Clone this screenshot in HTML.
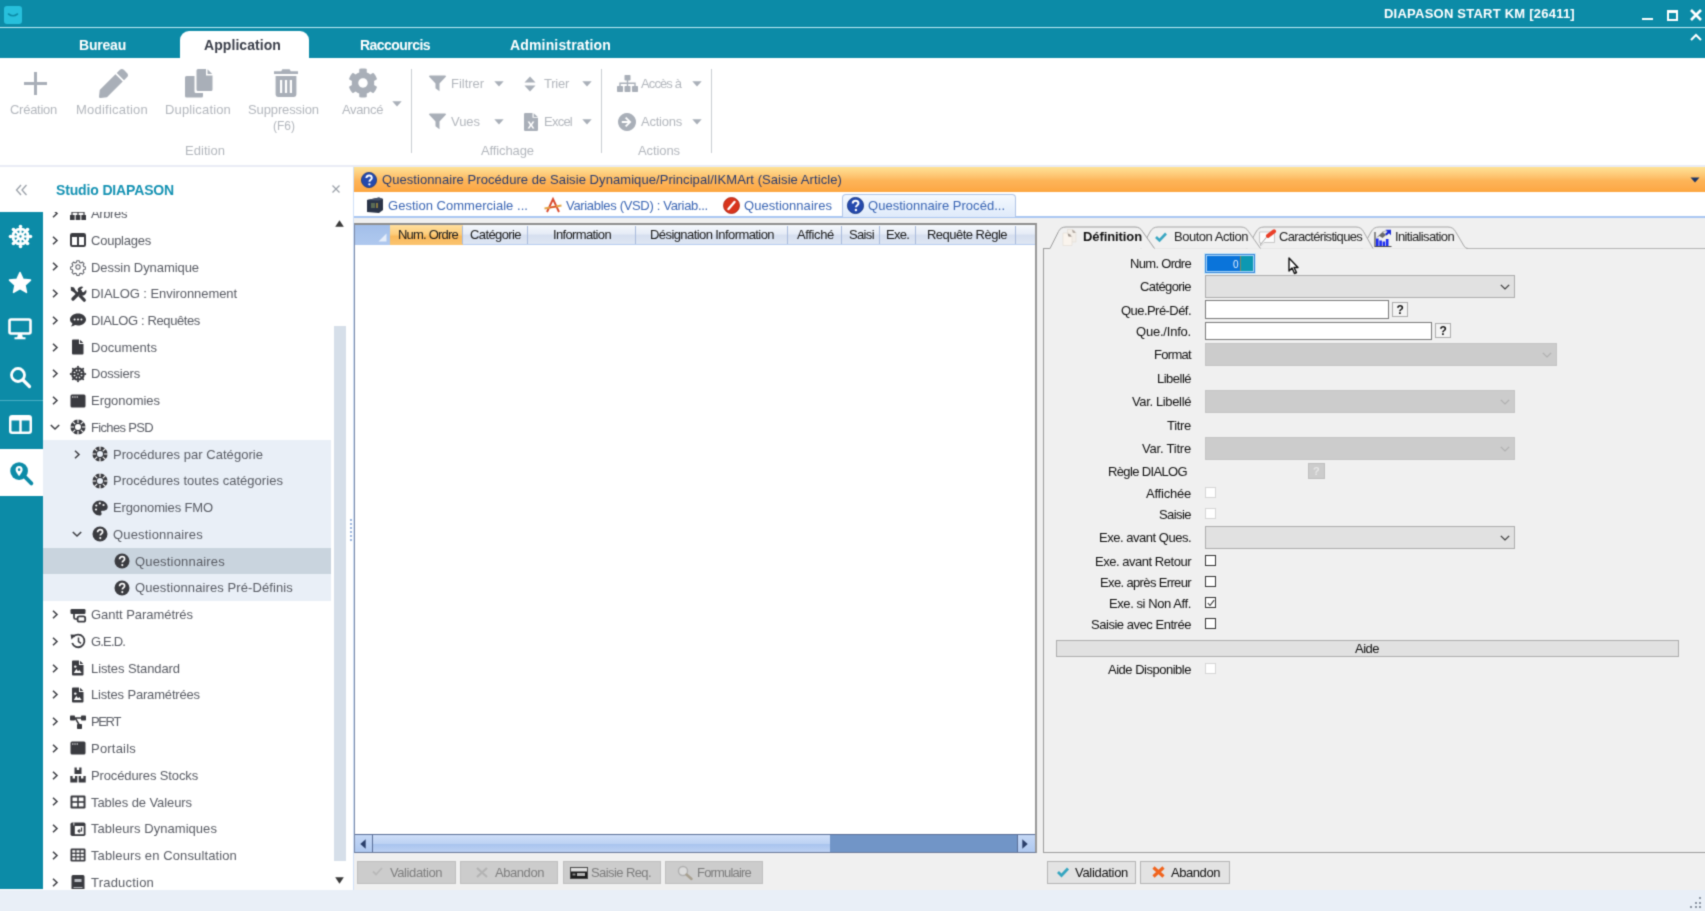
<!DOCTYPE html>
<html lang="fr"><head><meta charset="utf-8"><title>DIAPASON START KM [26411]</title>
<style>
html,body{margin:0;padding:0;overflow:hidden;}
#clip{position:absolute;left:0;top:0;width:1705px;height:911px;overflow:hidden;}
body{width:1705px;height:911px;position:relative;overflow:hidden;background:#fff;font-family:"Liberation Sans",Arial,sans-serif;}
.a{position:absolute;box-sizing:border-box;}
.t{position:absolute;white-space:nowrap;}
svg{overflow:visible;}
#wrap{position:absolute;left:0;top:0;width:1712px;height:918px;background:#fff;filter:url(#soft);}
</style></head><body>
<svg width="0" height="0" style="position:absolute"><defs><filter id="soft" x="0" y="0" width="100%" height="100%" color-interpolation-filters="sRGB"><feConvolveMatrix order="3" kernelMatrix="1 4 1 4 16 4 1 4 1" divisor="36" edgeMode="duplicate" preserveAlpha="true"/></filter></defs></svg>
<div id="clip"><div id="wrap">
<div class="a" style="left:0px;top:0px;width:1712px;height:58px;background:#0c8ba7;"></div>
<div class="a" style="left:0px;top:27px;width:1712px;height:1px;background:#bdeaf4;"></div>
<div class="a" style="left:4px;top:6px;width:18px;height:18px;background:#27c0dc;border-radius:3px;"></div>
<svg class="a" style="left:8px;top:13px;" width="10" height="5" viewBox="0 0 10 5"><path d="M0.5 1 Q5 4.5 9.5 1" fill="none" stroke="#0c8ba7" stroke-width="1.6" stroke-linecap="round"/></svg>
<span class="t" style="left:1384.0px;top:4.5px;font-size:13px;line-height:17px;color:#ffffff;letter-spacing:0.23px;font-weight:bold;">DIAPASON START KM [26411]</span>
<div class="a" style="left:1642px;top:18px;width:11px;height:2px;background:#fff;"></div>
<div class="a" style="left:1667px;top:10px;width:11px;height:11px;border:2px solid #fff;border-top-width:3px;"></div>
<svg class="a" style="left:1690px;top:9px;" width="12" height="12" viewBox="0 0 12 12"><path d="M1 1 L11 11 M11 1 L1 11" stroke="#fff" stroke-width="2.6" fill="none"/></svg>
<svg class="a" style="left:1690px;top:33px;" width="12" height="8" viewBox="0 0 12 8"><path d="M1 7 L6 2 L11 7" stroke="#fff" stroke-width="2" fill="none"/></svg>
<div class="a" style="left:180px;top:31px;width:129px;height:27px;background:#fff;border-radius:9px 9px 0 0;"></div>
<span class="t" style="left:79.0px;top:35.8px;font-size:14px;line-height:18px;color:#ffffff;letter-spacing:-0.21px;font-weight:bold;">Bureau</span>
<span class="t" style="left:204.0px;top:35.8px;font-size:14px;line-height:18px;color:#3b3f4a;letter-spacing:0.07px;font-weight:bold;">Application</span>
<span class="t" style="left:360.0px;top:35.8px;font-size:14px;line-height:18px;color:#ffffff;letter-spacing:-0.55px;font-weight:bold;">Raccourcis</span>
<span class="t" style="left:510.0px;top:35.8px;font-size:14px;line-height:18px;color:#ffffff;letter-spacing:0.16px;font-weight:bold;">Administration</span>
<div class="a" style="left:0px;top:58px;width:1712px;height:107px;background:#fff;"></div>
<div class="a" style="left:0px;top:165px;width:1712px;height:2px;background:#e9ecf5;"></div>
<div class="a" style="left:24px;top:81.5px;width:23px;height:3.0px;background:#a9afb8;"></div>
<div class="a" style="left:34px;top:71.5px;width:3px;height:23.0px;background:#a9afb8;"></div>
<svg class="a" style="left:99px;top:68.5px;" width="29" height="29" viewBox="0 0 512 512"><path fill="#a9afb8" d="M290.74 93.24l128.020 128.020-277.990 277.990-114.140 12.600C11.350 513.540-1.560 500.620.14 485.340l12.700-114.220 277.900-277.880zm207.200-19.060l-60.110-60.110c-18.750-18.750-49.160-18.750-67.910 0l-56.550 56.550 128.020 128.020 56.550-56.550c18.750-18.760 18.750-49.160 0-67.910z"/></svg>
<svg class="a" style="left:184px;top:68px;" width="30" height="30" viewBox="0 0 30 30"><g fill="#a9afb8"><path d="M13 1 h9 v6.5 h6.5 v14 a1.5 1.5 0 0 1 -1.5 1.5 h-13 a1.5 1.5 0 0 1 -1.5 -1.5 v-19 a1.5 1.5 0 0 1 1.5 -1.5z"/><path d="M23.5 1.3 l4.7 4.7 h-4.7z"/><path d="M2.5 8 h8 v15.5 a1.5 1.5 0 0 0 1.5 1.5 h7 v3 a1.5 1.5 0 0 1 -1.5 1.5 h-15 a1.5 1.5 0 0 1 -1.5 -1.5 v-18.5 a1.5 1.5 0 0 1 1.5 -1.5z"/></g></svg>
<svg class="a" style="left:273px;top:68px;" width="26" height="30" viewBox="0 0 26 30"><g fill="#a9afb8"><path d="M1 3.2 h7.2 l1.2 -2 h7.2 l1.2 2 h7.2 v2.8 h-24z"/><path d="M2.6 8 h20.8 v18.6 a2.4 2.4 0 0 1 -2.4 2.4 h-16 a2.4 2.4 0 0 1 -2.4 -2.4z M7 12 v13 h2.2 v-13z M11.9 12 v13 h2.2 v-13z M16.8 12 v13 h2.2 v-13z" fill-rule="evenodd"/></g></svg>
<svg class="a" style="left:348px;top:68px;" width="30" height="30" viewBox="0 0 512 512"><path fill="#a9afb8" d="M487.4 315.7l-42.6-24.6c4.3-23.2 4.3-47 0-70.2l42.6-24.6c4.9-2.8 7.1-8.6 5.500-14-11.100-35.600-30-67.800-54.700-94.600-3.800-4.100-10-5.100-14.800-2.300L380.800 110c-17.900-15.400-38.500-27.300-60.800-35.100V25.800c0-5.600-3.900-10.500-9.400-11.700-36.700-8.200-74.300-7.800-109.200 0-5.500 1.200-9.400 6.100-9.400 11.700V75c-22.200 7.900-42.800 19.800-60.800 35.100L88.700 85.500c-4.900-2.800-11-1.900-14.800 2.300-24.700 26.700-43.600 58.900-54.700 94.600-1.700 5.400.6 11.200 5.500 14L67.300 221c-4.300 23.200-4.300 47 0 70.200l-42.600 24.600c-4.900 2.800-7.100 8.600-5.500 14 11.100 35.600 30 67.800 54.700 94.600 3.800 4.100 10 5.100 14.800 2.300l42.600-24.600c17.900 15.400 38.500 27.300 60.800 35.100v49.200c0 5.600 3.900 10.500 9.400 11.700 36.700 8.200 74.300 7.800 109.200 0 5.500-1.200 9.400-6.100 9.400-11.700v-49.200c22.200-7.900 42.800-19.800 60.800-35.100l42.600 24.600c4.900 2.800 11 1.900 14.800-2.300 24.700-26.700 43.600-58.900 54.700-94.600 1.500-5.500-.7-11.300-5.600-14.100zM256 336c-44.100 0-80-35.900-80-80s35.900-80 80-80 80 35.900 80 80-35.900 80-80 80z"/></svg>
<span class="t" style="left:10.0px;top:100.8px;font-size:13px;line-height:17px;color:#b3b7bd;letter-spacing:-0.27px;">Création</span>
<span class="t" style="left:76.0px;top:100.8px;font-size:13px;line-height:17px;color:#b3b7bd;letter-spacing:0.22px;">Modification</span>
<span class="t" style="left:165.0px;top:100.8px;font-size:13px;line-height:17px;color:#b3b7bd;letter-spacing:0.15px;">Duplication</span>
<span class="t" style="left:248.0px;top:100.8px;font-size:13px;line-height:17px;color:#b3b7bd;letter-spacing:-0.12px;">Suppression</span>
<span class="t" style="left:273.0px;top:118.3px;font-size:12px;line-height:16px;color:#b3b7bd;letter-spacing:0.00px;">(F6)</span>
<span class="t" style="left:342.0px;top:100.8px;font-size:13px;line-height:17px;color:#b3b7bd;letter-spacing:-0.35px;">Avancé</span>
<span class="t" style="left:185.0px;top:141.8px;font-size:13px;line-height:17px;color:#b3b7bd;letter-spacing:0.04px;">Edition</span>
<span class="t" style="left:481.0px;top:141.8px;font-size:13px;line-height:17px;color:#b3b7bd;letter-spacing:-0.11px;">Affichage</span>
<span class="t" style="left:638.0px;top:141.8px;font-size:13px;line-height:17px;color:#b3b7bd;letter-spacing:-0.09px;">Actions</span>
<svg class="a" style="left:392px;top:101px;" width="10" height="6" viewBox="0 0 10 6"><path d="M0.3 0.3 h9.4 l-4.7 5.2z" fill="#a9afb8"/></svg>
<div class="a" style="left:411px;top:69px;width:1px;height:84px;background:#c9cdd2;"></div>
<div class="a" style="left:601px;top:69px;width:1px;height:84px;background:#c9cdd2;"></div>
<div class="a" style="left:711px;top:69px;width:1px;height:84px;background:#c9cdd2;"></div>
<svg class="a" style="left:428px;top:75px;" width="18" height="17" viewBox="0 0 18 17"><path d="M0.8 0.5 h16.4 a0.8 0.8 0 0 1 0.6 1.3 l-6.3 6.6 v7.8 l-4 -2.9 v-4.9 l-6.300 -6.600 a0.800 0.800 0 0 1 0.600 -1.300z" fill="#a9afb8"/></svg>
<svg class="a" style="left:428px;top:113px;" width="18" height="17" viewBox="0 0 18 17"><path d="M0.8 0.5 h16.4 a0.8 0.8 0 0 1 0.6 1.3 l-6.3 6.6 v7.8 l-4 -2.9 v-4.9 l-6.300 -6.600 a0.800 0.800 0 0 1 0.600 -1.300z" fill="#a9afb8"/></svg>
<span class="t" style="left:451.0px;top:74.8px;font-size:13px;line-height:17px;color:#b3b7bd;letter-spacing:-0.03px;">Filtrer</span>
<svg class="a" style="left:494px;top:81px;" width="10" height="6" viewBox="0 0 10 6"><path d="M0.3 0.3 h9.4 l-4.7 5.2z" fill="#a9afb8"/></svg>
<span class="t" style="left:451.0px;top:112.8px;font-size:13px;line-height:17px;color:#b3b7bd;letter-spacing:-0.04px;">Vues</span>
<svg class="a" style="left:494px;top:119px;" width="10" height="6" viewBox="0 0 10 6"><path d="M0.3 0.3 h9.4 l-4.7 5.2z" fill="#a9afb8"/></svg>
<svg class="a" style="left:524px;top:76px;" width="12" height="16" viewBox="0 0 12 16"><path d="M0.5 6.5 L6 0.5 L11.5 6.5z M0.5 9.500 L6 15.500 L11.500 9.500z" fill="#a9afb8"/></svg>
<span class="t" style="left:544.0px;top:74.8px;font-size:13px;line-height:17px;color:#b3b7bd;letter-spacing:-0.25px;">Trier</span>
<svg class="a" style="left:582px;top:81px;" width="10" height="6" viewBox="0 0 10 6"><path d="M0.3 0.3 h9.4 l-4.7 5.2z" fill="#a9afb8"/></svg>
<svg class="a" style="left:524px;top:113px;" width="14" height="18" viewBox="0 0 14 18"><path fill="#a9afb8" fill-rule="evenodd" d="M1.2 0 h7.3 v4.8 h5.500 v12 a1.200 1.200 0 0 1 -1.200 1.200 h-11.600 a1.200 1.200 0 0 1 -1.200 -1.200 v-15.600 a1.200 1.200 0 0 1 1.200 -1.200z M9.700 0.200 l4.100 3.700 h-4.100z M3.600 8.500 l2.300 3.500 l-2.300 3.500 h1.900 l1.500 -2.400 l1.500 2.400 h1.900 l-2.300 -3.500 l2.300 -3.500 h-1.900 l-1.500 2.400 l-1.500 -2.400z"/></svg>
<span class="t" style="left:544.0px;top:112.8px;font-size:13px;line-height:17px;color:#b3b7bd;letter-spacing:-0.76px;">Excel</span>
<svg class="a" style="left:582px;top:119px;" width="10" height="6" viewBox="0 0 10 6"><path d="M0.3 0.3 h9.4 l-4.7 5.2z" fill="#a9afb8"/></svg>
<svg class="a" style="left:617px;top:75px;" width="21" height="17" viewBox="0 0 21 17"><g fill="#a9afb8"><rect x="7.5" y="0" width="6" height="5.500" rx="0.800"/><rect x="0" y="11" width="6" height="6" rx="0.800"/><rect x="7.500" y="11" width="6" height="6" rx="0.800"/><rect x="15" y="11" width="6" height="6" rx="0.800"/><path d="M9.800 5 h1.400 v2.600 h7.500 v3.800 h-1.400 v-2.400 h-6.100 v2.400 h-1.400 v-2.400 h-6.100 v2.400 h-1.400 v-3.800 h7.500z"/></g></svg>
<span class="t" style="left:641.0px;top:74.8px;font-size:13px;line-height:17px;color:#b3b7bd;letter-spacing:-0.89px;">Accès à</span>
<svg class="a" style="left:692px;top:81px;" width="10" height="6" viewBox="0 0 10 6"><path d="M0.3 0.3 h9.4 l-4.7 5.2z" fill="#a9afb8"/></svg>
<svg class="a" style="left:618px;top:113px;" width="18" height="18" viewBox="0 0 18 18"><path fill="#a9afb8" fill-rule="evenodd" d="M9 0 a9 9 0 1 0 0.010 0z M8.300 3.900 l5.100 5.100 l-5.100 5.100 l-1.300 -1.300 l2.800 -2.800 h-6 v-2 h6 l-2.800 -2.800z"/></svg>
<span class="t" style="left:641.0px;top:112.8px;font-size:13px;line-height:17px;color:#b3b7bd;letter-spacing:-0.23px;">Actions</span>
<svg class="a" style="left:692px;top:119px;" width="10" height="6" viewBox="0 0 10 6"><path d="M0.3 0.3 h9.4 l-4.7 5.2z" fill="#a9afb8"/></svg>
<svg class="a" style="left:15px;top:184px;" width="13" height="12" viewBox="0 0 13 12"><path d="M6 1 L1.500 6 L6 11 M11.500 1 L7 6 L11.500 11" fill="none" stroke="#9aa0a8" stroke-width="1.300"/></svg>
<span class="t" style="left:56.0px;top:180.8px;font-size:14px;line-height:18px;color:#1592b3;letter-spacing:-0.15px;font-weight:bold;">Studio DIAPASON</span>
<svg class="a" style="left:332px;top:185px;" width="8" height="8" viewBox="0 0 8 8"><path d="M0.500 0.500 L7.500 7.500 M7.500 0.500 L0.500 7.500" stroke="#9aa0a8" stroke-width="1.200" fill="none"/></svg>
<div class="a" style="left:0px;top:212px;width:43px;height:677px;background:#0c8ba7;"></div>
<div class="a" style="left:0px;top:400px;width:43px;height:1px;background:#4aaec4;"></div>
<div class="a" style="left:0px;top:449px;width:43px;height:47px;background:#fff;"></div>
<svg class="a" style="left:8.5px;top:224.8px;" width="23" height="23" viewBox="0 0 24 24"><circle cx="12" cy="12" r="9.500" fill="#fff"/><circle cx="12.00" cy="1.60" r="1.900" fill="#fff"/><circle cx="19.35" cy="4.65" r="1.900" fill="#fff"/><circle cx="22.40" cy="12.00" r="1.900" fill="#fff"/><circle cx="19.35" cy="19.35" r="1.900" fill="#fff"/><circle cx="12.00" cy="22.40" r="1.900" fill="#fff"/><circle cx="4.65" cy="19.35" r="1.900" fill="#fff"/><circle cx="1.60" cy="12.00" r="1.900" fill="#fff"/><circle cx="4.65" cy="4.65" r="1.900" fill="#fff"/><path d="M13.08 7.84 L13.30 5.63 L15.59 6.58 L14.18 8.29z" fill="#0c8ba7"/><path d="M15.71 9.82 L17.42 8.41 L18.37 10.70 L16.16 10.92z" fill="#0c8ba7"/><path d="M16.16 13.08 L18.37 13.30 L17.42 15.59 L15.71 14.18z" fill="#0c8ba7"/><path d="M14.18 15.71 L15.59 17.42 L13.30 18.37 L13.08 16.16z" fill="#0c8ba7"/><path d="M10.92 16.16 L10.70 18.37 L8.41 17.42 L9.82 15.71z" fill="#0c8ba7"/><path d="M8.29 14.18 L6.58 15.59 L5.63 13.30 L7.84 13.08z" fill="#0c8ba7"/><path d="M7.84 10.92 L5.63 10.70 L6.58 8.41 L8.29 9.82z" fill="#0c8ba7"/><path d="M9.82 8.29 L8.41 6.58 L10.70 5.63 L10.92 7.84z" fill="#0c8ba7"/><circle cx="12" cy="12" r="1.200" fill="#0c8ba7"/></svg>
<svg class="a" style="left:8px;top:271px;" width="24" height="23" viewBox="0 0 24 23"><path fill="#fff" stroke="#fff" stroke-width="1.500" stroke-linejoin="round" d="M12 1.500 L15.100 8.200 L22.500 9.100 L17 14.100 L18.500 21.400 L12 17.700 L5.500 21.400 L7 14.100 L1.500 9.100 L8.900 8.200z"/></svg>
<svg class="a" style="left:8px;top:318px;" width="24" height="22" viewBox="0 0 24 22"><g fill="none" stroke="#fff"><rect x="1.500" y="1.500" width="21" height="14" rx="1.500" stroke-width="2.600"/></g><path fill="#fff" d="M10 16 h4 l0.800 3.200 h2.700 v2 h-11 v-2 h2.700z"/></svg>
<svg class="a" style="left:9px;top:366px;" width="22" height="22" viewBox="0 0 22 22"><circle cx="9" cy="9" r="6.500" fill="none" stroke="#fff" stroke-width="2.800"/><path d="M14 14 L20.500 20.500" stroke="#fff" stroke-width="3.200" stroke-linecap="round"/></svg>
<svg class="a" style="left:9px;top:415px;" width="23" height="19" viewBox="0 0 23 19"><rect x="1.250" y="1.250" width="20.500" height="16.500" rx="2" fill="none" stroke="#fff" stroke-width="2.500"/><path d="M1 1.500 h21 v4 h-21z M10.300 2 h2.400 v16 h-2.400z" fill="#fff"/></svg>
<svg class="a" style="left:8.5px;top:460.5px;" width="24.5" height="24.5" viewBox="0 0 23 23"><circle cx="9.500" cy="9.500" r="8.300" fill="#0c8ba7"/><path d="M15 15 L21 21" stroke="#0c8ba7" stroke-width="3.600" stroke-linecap="round"/><path fill="#fff" d="M9.500 4.800 a3.300 3.300 0 0 1 3.300 3.300 c0 2.200 -3.300 6 -3.300 6 c0 0 -3.300 -3.800 -3.300 -6 a3.300 3.300 0 0 1 3.300 -3.300z"/><circle cx="9.500" cy="8.100" r="1.200" fill="#0c8ba7"/></svg>
<div class="a" style="left:43px;top:212px;width:290px;height:677px;overflow:hidden;">
<div class="a" style="left:0;top:228.0px;width:288px;height:161.0px;background:#e9eff7;"></div>
<div class="a" style="left:0;top:335.5px;width:288px;height:26.750px;background:#c9d4de;"></div>
<svg class="a" style="left:9px;top:-3.25px;" width="6" height="9" viewBox="0 0 6 9"><path d="M1 0.800 L5 4.500 L1 8.200" fill="none" stroke="#3a3b40" stroke-width="1.500"/></svg>
<svg class="a" style="left:27px;top:-6.75px;" width="16" height="16" viewBox="0 0 16 16"><g fill="#3a3b40"><rect x="5.500" y="0" width="5" height="4.500"/><rect x="0" y="10" width="4.600" height="5"/><rect x="5.700" y="10" width="4.600" height="5"/><rect x="11.400" y="10" width="4.600" height="5"/><path d="M7.400 4 h1.200 v2.500 h6 v4 h-1.200 v-2.800 h-4.800 v2.800 h-1.200 v-2.800 h-4.800 v2.800 h-1.200 v-4 h6z"/></g></svg>
<span class="t" style="left:48px;top:-7.1px;font-size:13px;line-height:17px;color:#595c64;letter-spacing:-0.38px;">Arbres</span>
<svg class="a" style="left:9px;top:23.5px;" width="6" height="9" viewBox="0 0 6 9"><path d="M1 0.800 L5 4.500 L1 8.200" fill="none" stroke="#3a3b40" stroke-width="1.500"/></svg>
<svg class="a" style="left:27px;top:20.0px;" width="16" height="16" viewBox="0 0 16 16"><rect x="1" y="2" width="14" height="12" rx="1.300" fill="none" stroke="#3a3b40" stroke-width="2"/><path d="M1 2 h14 v3 h-14z M7 3 h2 v11 h-2z" fill="#3a3b40"/></svg>
<span class="t" style="left:48px;top:19.7px;font-size:13px;line-height:17px;color:#595c64;letter-spacing:-0.24px;">Couplages</span>
<svg class="a" style="left:9px;top:50.25px;" width="6" height="9" viewBox="0 0 6 9"><path d="M1 0.800 L5 4.500 L1 8.200" fill="none" stroke="#3a3b40" stroke-width="1.500"/></svg>
<svg class="a" style="left:27px;top:46.75px;" width="16" height="16" viewBox="0 0 16 16"><g transform="translate(8 8) scale(0.9)" fill="none" stroke="#5e6068" stroke-width="1.150"><circle r="2.400"/><path d="M-1.300 -7 h2.600 l0.400 1.800 l1.600 0.700 l1.600 -1 l1.800 1.800 l-1 1.600 l0.700 1.600 l1.800 0.400 v2.600 l-1.800 0.400 l-0.700 1.600 l1 1.600 l-1.800 1.800 l-1.600 -1 l-1.600 0.700 l-0.400 1.800 h-2.600 l-0.400 -1.800 l-1.600 -0.700 l-1.600 1 l-1.800 -1.800 l1 -1.600 l-0.700 -1.600 l-1.800 -0.400 v-2.600 l1.800 -0.400 l0.700 -1.600 l-1 -1.600 l1.800 -1.800 l1.600 1 l1.600 -0.700z" stroke-linejoin="round"/></g></svg>
<span class="t" style="left:48px;top:46.5px;font-size:13px;line-height:17px;color:#595c64;letter-spacing:-0.07px;">Dessin Dynamique</span>
<svg class="a" style="left:9px;top:77.0px;" width="6" height="9" viewBox="0 0 6 9"><path d="M1 0.800 L5 4.500 L1 8.200" fill="none" stroke="#3a3b40" stroke-width="1.500"/></svg>
<svg class="a" style="left:27px;top:73.5px;" width="16" height="16" viewBox="0 0 16 16"><path d="M3 13 L10.500 5.500" stroke="#3a3b40" stroke-width="3.400" stroke-linecap="round" fill="none"/><path d="M8.500 3.200 a4.200 4.200 0 0 1 5.800 -2.400 l-2.500 2.500 l0.500 2.300 l2.300 0.500 l2.500 -2.500 a4.200 4.200 0 0 1 -6.300 5z" fill="#3a3b40" transform="translate(-1 0.200)"/><path d="M0.800 0.800 l3.200 0.700 l1.700 2.900 l3.800 3.800 l-1.900 1.900 l-3.800 -3.800 l-2.900 -1.700z" fill="#3a3b40"/><path d="M8.300 10.300 l2.200 -2.200 l4.900 4.900 a1.600 1.600 0 0 1 -2.300 2.300z" fill="#3a3b40"/></svg>
<span class="t" style="left:48px;top:73.2px;font-size:13px;line-height:17px;color:#595c64;letter-spacing:-0.06px;">DIALOG : Environnement</span>
<svg class="a" style="left:9px;top:103.75px;" width="6" height="9" viewBox="0 0 6 9"><path d="M1 0.800 L5 4.500 L1 8.200" fill="none" stroke="#3a3b40" stroke-width="1.500"/></svg>
<svg class="a" style="left:27px;top:100.25px;" width="16" height="16" viewBox="0 0 16 16"><path fill="#3a3b40" d="M8 1.500 c4.400 0 8 2.700 8 6 s-3.600 6 -8 6 c-1 0 -2 -0.150 -2.900 -0.400 c-1.200 0.900 -2.800 1.400 -4.300 1.400 c0.900 -0.900 1.500 -2 1.600 -3 c-1.500 -1.100 -2.400 -2.500 -2.400 -4 c0 -3.300 3.600 -6 8 -6z"/><g fill="#fff"><circle cx="4.600" cy="7.500" r="1"/><circle cx="8" cy="7.500" r="1"/><circle cx="11.400" cy="7.500" r="1"/></g></svg>
<span class="t" style="left:48px;top:100.0px;font-size:13px;line-height:17px;color:#595c64;letter-spacing:-0.39px;">DIALOG : Requêtes</span>
<svg class="a" style="left:9px;top:130.5px;" width="6" height="9" viewBox="0 0 6 9"><path d="M1 0.800 L5 4.500 L1 8.200" fill="none" stroke="#3a3b40" stroke-width="1.500"/></svg>
<svg class="a" style="left:27px;top:127.0px;" width="16" height="16" viewBox="0 0 16 16"><path fill="#3a3b40" d="M3 0.500 h6 v4.500 h4.500 v9.500 a1 1 0 0 1 -1 1 h-9.500 a1 1 0 0 1 -1 -1 v-13 a1 1 0 0 1 1 -1z M10 0.700 l3.300 3.300 h-3.300z"/></svg>
<span class="t" style="left:48px;top:126.7px;font-size:13px;line-height:17px;color:#595c64;letter-spacing:0.03px;">Documents</span>
<svg class="a" style="left:9px;top:157.25px;" width="6" height="9" viewBox="0 0 6 9"><path d="M1 0.800 L5 4.500 L1 8.200" fill="none" stroke="#3a3b40" stroke-width="1.500"/></svg>
<svg class="a" style="left:27px;top:153.75px;" width="16" height="16" viewBox="0 0 16 16"><g transform="scale(0.667)"><circle cx="12" cy="12" r="10.2" fill="#3a3b40"/><circle cx="12.00" cy="1.10" r="1.5" fill="#3a3b40"/><circle cx="19.71" cy="4.29" r="1.5" fill="#3a3b40"/><circle cx="22.90" cy="12.00" r="1.5" fill="#3a3b40"/><circle cx="19.71" cy="19.71" r="1.5" fill="#3a3b40"/><circle cx="12.00" cy="22.90" r="1.5" fill="#3a3b40"/><circle cx="4.29" cy="19.71" r="1.5" fill="#3a3b40"/><circle cx="1.10" cy="12.00" r="1.5" fill="#3a3b40"/><circle cx="4.29" cy="4.29" r="1.5" fill="#3a3b40"/><path d="M13.05 7.93 L13.40 5.14 L15.86 6.16 L14.13 8.38z" fill="#fff"/><path d="M15.62 9.87 L17.84 8.14 L18.86 10.60 L16.07 10.95z" fill="#fff"/><path d="M16.07 13.05 L18.86 13.40 L17.84 15.86 L15.62 14.13z" fill="#fff"/><path d="M14.13 15.62 L15.86 17.84 L13.40 18.86 L13.05 16.07z" fill="#fff"/><path d="M10.95 16.07 L10.60 18.86 L8.14 17.84 L9.87 15.62z" fill="#fff"/><path d="M8.38 14.13 L6.16 15.86 L5.14 13.40 L7.93 13.05z" fill="#fff"/><path d="M7.93 10.95 L5.14 10.60 L6.16 8.14 L8.38 9.87z" fill="#fff"/><path d="M9.87 8.38 L8.14 6.16 L10.60 5.14 L10.95 7.93z" fill="#fff"/><circle cx="12" cy="12" r="1.200" fill="#fff"/></g></svg>
<span class="t" style="left:48px;top:153.4px;font-size:13px;line-height:17px;color:#595c64;letter-spacing:-0.20px;">Dossiers</span>
<svg class="a" style="left:9px;top:184.0px;" width="6" height="9" viewBox="0 0 6 9"><path d="M1 0.800 L5 4.500 L1 8.200" fill="none" stroke="#3a3b40" stroke-width="1.500"/></svg>
<svg class="a" style="left:27px;top:180.5px;" width="16" height="16" viewBox="0 0 16 16"><rect x="0.500" y="1.500" width="15" height="13" rx="1.500" fill="#3a3b40"/><g fill="#fff"><circle cx="2.800" cy="4" r="0.700"/><circle cx="5" cy="4" r="0.700"/><circle cx="7.200" cy="4" r="0.700"/></g></svg>
<span class="t" style="left:48px;top:180.2px;font-size:13px;line-height:17px;color:#595c64;letter-spacing:-0.04px;">Ergonomies</span>
<svg class="a" style="left:7px;top:212.25px;" width="10" height="6" viewBox="0 0 10 6"><path d="M0.800 1 L5 5 L9.200 1" fill="none" stroke="#3a3b40" stroke-width="1.500"/></svg>
<svg class="a" style="left:27px;top:207.25px;" width="16" height="16" viewBox="0 0 16 16"><circle cx="8" cy="8" r="5.300" fill="none" stroke="#3a3b40" stroke-width="4.600"/><g stroke="#fff" stroke-width="1.100"><path d="M8 0 V4 M8 12 V16 M0 8 H4 M12 8 H16 M2.300 2.300 L5.200 5.200 M10.800 10.800 L13.700 13.700 M13.700 2.300 L10.800 5.200 M5.200 10.800 L2.300 13.700"/></g></svg>
<span class="t" style="left:48px;top:206.9px;font-size:13px;line-height:17px;color:#595c64;letter-spacing:-0.66px;">Fiches PSD</span>
<svg class="a" style="left:31px;top:237.5px;" width="6" height="9" viewBox="0 0 6 9"><path d="M1 0.800 L5 4.500 L1 8.200" fill="none" stroke="#3a3b40" stroke-width="1.500"/></svg>
<svg class="a" style="left:49px;top:234.0px;" width="16" height="16" viewBox="0 0 16 16"><circle cx="8" cy="8" r="5.300" fill="none" stroke="#3a3b40" stroke-width="4.600"/><g stroke="#fff" stroke-width="1.100"><path d="M8 0 V4 M8 12 V16 M0 8 H4 M12 8 H16 M2.300 2.300 L5.200 5.200 M10.800 10.800 L13.700 13.700 M13.700 2.300 L10.800 5.200 M5.200 10.800 L2.300 13.700"/></g></svg>
<span class="t" style="left:70px;top:233.7px;font-size:13px;line-height:17px;color:#595c64;letter-spacing:0.05px;">Procédures par Catégorie</span>
<svg class="a" style="left:49px;top:260.75px;" width="16" height="16" viewBox="0 0 16 16"><circle cx="8" cy="8" r="5.300" fill="none" stroke="#3a3b40" stroke-width="4.600"/><g stroke="#fff" stroke-width="1.100"><path d="M8 0 V4 M8 12 V16 M0 8 H4 M12 8 H16 M2.300 2.300 L5.200 5.200 M10.800 10.800 L13.700 13.700 M13.700 2.300 L10.800 5.200 M5.200 10.800 L2.300 13.700"/></g></svg>
<span class="t" style="left:70px;top:260.4px;font-size:13px;line-height:17px;color:#595c64;letter-spacing:0.03px;">Procédures toutes catégories</span>
<svg class="a" style="left:49px;top:287.5px;" width="16" height="16" viewBox="0 0 16 16"><path fill="#3a3b40" d="M8 0.500 c4.300 0 7.700 3 7.700 6.600 c0 2.300 -1.800 3.600 -3.600 3.600 h-1.800 c-1 0 -1.500 1 -1 1.800 c0.700 1.300 0.200 3 -1.800 3 c-3.800 0 -7.200 -3.300 -7.200 -7.500 s3.400 -7.500 7.700 -7.500z"/><g fill="#fff"><circle cx="4" cy="9.500" r="1.100"/><circle cx="4.300" cy="5.500" r="1.100"/><circle cx="7.800" cy="3.300" r="1.100"/><circle cx="11.500" cy="5" r="1.100"/></g></svg>
<span class="t" style="left:70px;top:287.2px;font-size:13px;line-height:17px;color:#595c64;letter-spacing:-0.13px;">Ergonomies FMO</span>
<svg class="a" style="left:29px;top:319.25px;" width="10" height="6" viewBox="0 0 10 6"><path d="M0.800 1 L5 5 L9.200 1" fill="none" stroke="#3a3b40" stroke-width="1.500"/></svg>
<svg class="a" style="left:49px;top:314.25px;" width="16" height="16" viewBox="0 0 16 16"><circle cx="8" cy="8" r="7.500" fill="#3a3b40"/><path d="M5.600 6.200 c0 -1.500 1.100 -2.500 2.500 -2.500 s2.500 0.900 2.500 2.200 c0 1.700 -2.300 1.800 -2.300 3.700" fill="none" stroke="#fff" stroke-width="1.700"/><circle cx="8.300" cy="12.100" r="1.050" fill="#fff"/></svg>
<span class="t" style="left:70px;top:313.9px;font-size:13px;line-height:17px;color:#595c64;letter-spacing:0.18px;">Questionnaires</span>
<svg class="a" style="left:71px;top:341.0px;" width="16" height="16" viewBox="0 0 16 16"><circle cx="8" cy="8" r="7.500" fill="#3a3b40"/><path d="M5.600 6.200 c0 -1.500 1.100 -2.500 2.500 -2.500 s2.500 0.900 2.500 2.200 c0 1.700 -2.300 1.800 -2.300 3.700" fill="none" stroke="#fff" stroke-width="1.700"/><circle cx="8.300" cy="12.100" r="1.050" fill="#fff"/></svg>
<span class="t" style="left:92px;top:340.7px;font-size:13px;line-height:17px;color:#595c64;letter-spacing:0.18px;">Questionnaires</span>
<svg class="a" style="left:71px;top:367.75px;" width="16" height="16" viewBox="0 0 16 16"><circle cx="8" cy="8" r="7.500" fill="#3a3b40"/><path d="M5.600 6.200 c0 -1.500 1.100 -2.500 2.500 -2.500 s2.500 0.900 2.500 2.200 c0 1.700 -2.300 1.800 -2.300 3.700" fill="none" stroke="#fff" stroke-width="1.700"/><circle cx="8.300" cy="12.100" r="1.050" fill="#fff"/></svg>
<span class="t" style="left:92px;top:367.4px;font-size:13px;line-height:17px;color:#595c64;letter-spacing:0.10px;">Questionnaires Pré-Définis</span>
<svg class="a" style="left:9px;top:398.0px;" width="6" height="9" viewBox="0 0 6 9"><path d="M1 0.800 L5 4.500 L1 8.200" fill="none" stroke="#3a3b40" stroke-width="1.500"/></svg>
<svg class="a" style="left:27px;top:394.5px;" width="16" height="16" viewBox="0 0 16 16"><rect x="0.500" y="2" width="15" height="5" rx="1.200" fill="#3a3b40"/><rect x="7.600" y="9.300" width="7.600" height="5.400" rx="1.800" fill="none" stroke="#3a3b40" stroke-width="1.800"/><path d="M4 6.500 V10.500 Q4 12 5.500 12 H7.500" fill="none" stroke="#3a3b40" stroke-width="1.700"/></svg>
<span class="t" style="left:48px;top:394.2px;font-size:13px;line-height:17px;color:#595c64;letter-spacing:-0.04px;">Gantt Paramétrés</span>
<svg class="a" style="left:9px;top:424.75px;" width="6" height="9" viewBox="0 0 6 9"><path d="M1 0.800 L5 4.500 L1 8.200" fill="none" stroke="#3a3b40" stroke-width="1.500"/></svg>
<svg class="a" style="left:27px;top:421.25px;" width="16" height="16" viewBox="0 0 16 16"><path d="M3.200 4 a6.300 6.300 0 1 1 -1 6" fill="none" stroke="#3a3b40" stroke-width="1.800"/><path fill="#3a3b40" d="M0.500 1.500 l5.300 0.300 l-4.300 4.700z"/><path d="M8.500 4.500 v4 l2.500 1.800" fill="none" stroke="#3a3b40" stroke-width="1.500"/></svg>
<span class="t" style="left:48px;top:420.9px;font-size:13px;line-height:17px;color:#595c64;letter-spacing:-0.83px;">G.E.D.</span>
<svg class="a" style="left:9px;top:451.5px;" width="6" height="9" viewBox="0 0 6 9"><path d="M1 0.800 L5 4.500 L1 8.200" fill="none" stroke="#3a3b40" stroke-width="1.500"/></svg>
<svg class="a" style="left:27px;top:448.0px;" width="16" height="16" viewBox="0 0 16 16"><path fill="#3a3b40" d="M3 0.500 h6 v4.500 h4.500 v9.500 a1 1 0 0 1 -1 1 h-9.500 a1 1 0 0 1 -1 -1 v-13 a1 1 0 0 1 1 -1z M10 0.700 l3.300 3.300 h-3.300z"/><path fill="#fff" d="M3.800 13 l2.500 -4 l1.700 2.300 l1.300 -1.300 l2.400 3z"/><circle cx="5.300" cy="6.600" r="1.200" fill="#fff"/></svg>
<span class="t" style="left:48px;top:447.7px;font-size:13px;line-height:17px;color:#595c64;letter-spacing:-0.09px;">Listes Standard</span>
<svg class="a" style="left:9px;top:478.25px;" width="6" height="9" viewBox="0 0 6 9"><path d="M1 0.800 L5 4.500 L1 8.200" fill="none" stroke="#3a3b40" stroke-width="1.500"/></svg>
<svg class="a" style="left:27px;top:474.75px;" width="16" height="16" viewBox="0 0 16 16"><path fill="#3a3b40" d="M3 0.500 h6 v4.500 h4.500 v9.500 a1 1 0 0 1 -1 1 h-9.500 a1 1 0 0 1 -1 -1 v-13 a1 1 0 0 1 1 -1z M10 0.700 l3.300 3.300 h-3.300z"/><path fill="#fff" d="M3.800 13 l2.500 -4 l1.700 2.300 l1.300 -1.300 l2.400 3z"/><circle cx="5.300" cy="6.600" r="1.200" fill="#fff"/></svg>
<span class="t" style="left:48px;top:474.4px;font-size:13px;line-height:17px;color:#595c64;letter-spacing:-0.17px;">Listes Paramétrées</span>
<svg class="a" style="left:9px;top:505.0px;" width="6" height="9" viewBox="0 0 6 9"><path d="M1 0.800 L5 4.500 L1 8.200" fill="none" stroke="#3a3b40" stroke-width="1.500"/></svg>
<svg class="a" style="left:27px;top:501.5px;" width="16" height="16" viewBox="0 0 16 16"><g fill="#3a3b40"><rect x="0" y="1.500" width="5" height="5" rx="0.800"/><rect x="11" y="1.500" width="5" height="5" rx="0.800"/><rect x="7" y="10" width="5" height="5" rx="0.800"/></g><path d="M5 4 h6 M5.500 4.500 l3.500 6" stroke="#3a3b40" stroke-width="1.500" fill="none"/></svg>
<span class="t" style="left:48px;top:501.2px;font-size:13px;line-height:17px;color:#595c64;letter-spacing:-1.36px;">PERT</span>
<svg class="a" style="left:9px;top:531.75px;" width="6" height="9" viewBox="0 0 6 9"><path d="M1 0.800 L5 4.500 L1 8.200" fill="none" stroke="#3a3b40" stroke-width="1.500"/></svg>
<svg class="a" style="left:27px;top:528.25px;" width="16" height="16" viewBox="0 0 16 16"><rect x="0.500" y="1.500" width="15" height="13" rx="1.500" fill="#3a3b40"/><g fill="#fff"><circle cx="2.800" cy="4" r="0.700"/><circle cx="5" cy="4" r="0.700"/><circle cx="7.200" cy="4" r="0.700"/></g></svg>
<span class="t" style="left:48px;top:528.0px;font-size:13px;line-height:17px;color:#595c64;letter-spacing:0.21px;">Portails</span>
<svg class="a" style="left:9px;top:558.5px;" width="6" height="9" viewBox="0 0 6 9"><path d="M1 0.800 L5 4.500 L1 8.200" fill="none" stroke="#3a3b40" stroke-width="1.500"/></svg>
<svg class="a" style="left:27px;top:555.0px;" width="16" height="16" viewBox="0 0 16 16"><g fill="#3a3b40"><path d="M4.500 0.500 h2.300 v2.500 h2.400 v-2.500 h2.300 v6.500 h-7z"/><path d="M0.300 9 h2.300 v2.500 h2.400 v-2.500 h2.300 v6.500 h-7z"/><path d="M8.700 9 h2.300 v2.500 h2.400 v-2.500 h2.300 v6.500 h-7z"/></g></svg>
<span class="t" style="left:48px;top:554.7px;font-size:13px;line-height:17px;color:#595c64;letter-spacing:-0.12px;">Procédures Stocks</span>
<svg class="a" style="left:9px;top:585.25px;" width="6" height="9" viewBox="0 0 6 9"><path d="M1 0.800 L5 4.500 L1 8.200" fill="none" stroke="#3a3b40" stroke-width="1.500"/></svg>
<svg class="a" style="left:27px;top:581.75px;" width="16" height="16" viewBox="0 0 16 16"><rect x="0.500" y="1.500" width="15" height="13" rx="1.300" fill="#3a3b40"/><g fill="#fff"><rect x="2.500" y="3.500" width="4.700" height="3.700"/><rect x="8.800" y="3.500" width="4.700" height="3.700"/><rect x="2.500" y="8.800" width="4.700" height="3.700"/><rect x="8.800" y="8.800" width="4.700" height="3.700"/></g></svg>
<span class="t" style="left:48px;top:581.5px;font-size:13px;line-height:17px;color:#595c64;letter-spacing:-0.08px;">Tables de Valeurs</span>
<svg class="a" style="left:9px;top:612.0px;" width="6" height="9" viewBox="0 0 6 9"><path d="M1 0.800 L5 4.500 L1 8.200" fill="none" stroke="#3a3b40" stroke-width="1.500"/></svg>
<svg class="a" style="left:27px;top:608.5px;" width="16" height="16" viewBox="0 0 16 16"><rect x="0.500" y="1.500" width="15" height="13.500" rx="1.800" fill="#3a3b40"/><rect x="4.800" y="5" width="8.900" height="8.200" fill="#fff"/><path d="M11.500 6.500 v3.500 h-3.300 M9.700 8.300 l-1.700 1.700 l1.700 1.700" fill="none" stroke="#3a3b40" stroke-width="1.200"/><rect x="3.400" y="1.500" width="0.900" height="3" fill="#fff"/></svg>
<span class="t" style="left:48px;top:608.2px;font-size:13px;line-height:17px;color:#595c64;letter-spacing:0.05px;">Tableurs Dynamiques</span>
<svg class="a" style="left:9px;top:638.75px;" width="6" height="9" viewBox="0 0 6 9"><path d="M1 0.800 L5 4.500 L1 8.200" fill="none" stroke="#3a3b40" stroke-width="1.500"/></svg>
<svg class="a" style="left:27px;top:635.25px;" width="16" height="16" viewBox="0 0 16 16"><rect x="0.500" y="1.500" width="15" height="13" rx="1.300" fill="#3a3b40"/><g fill="#fff"><rect x="2.300" y="3.300" width="3" height="2.300"/><rect x="6.500" y="3.300" width="3" height="2.300"/><rect x="10.700" y="3.300" width="3" height="2.300"/><rect x="2.300" y="6.900" width="3" height="2.300"/><rect x="6.500" y="6.900" width="3" height="2.300"/><rect x="10.700" y="6.900" width="3" height="2.300"/><rect x="2.300" y="10.500" width="3" height="2.300"/><rect x="6.500" y="10.500" width="3" height="2.300"/><rect x="10.700" y="10.500" width="3" height="2.300"/></g></svg>
<span class="t" style="left:48px;top:635.0px;font-size:13px;line-height:17px;color:#595c64;letter-spacing:0.12px;">Tableurs en Consultation</span>
<svg class="a" style="left:9px;top:665.5px;" width="6" height="9" viewBox="0 0 6 9"><path d="M1 0.800 L5 4.500 L1 8.200" fill="none" stroke="#3a3b40" stroke-width="1.500"/></svg>
<svg class="a" style="left:27px;top:662.0px;" width="16" height="16" viewBox="0 0 16 16"><path fill="#3a3b40" d="M3 1 h10 a1.500 1.500 0 0 1 1.500 1.500 v13.500 h-13 v-13.500 a1.500 1.500 0 0 1 1.500 -1.500z"/><rect x="4.500" y="5" width="7" height="3" fill="#b9bcc2"/><rect x="3.500" y="13" width="9" height="1" fill="#b9bcc2"/></svg>
<span class="t" style="left:48px;top:661.7px;font-size:13px;line-height:17px;color:#595c64;letter-spacing:0.21px;">Traduction</span>
</div>
<div class="a" style="left:334px;top:326px;width:12px;height:535px;background:#d6dfe9;"></div>
<svg class="a" style="left:335px;top:220px;" width="9" height="7" viewBox="0 0 9 7"><path d="M4.500 0.300 L8.800 6.700 H0.200z" fill="#3a3a3a"/></svg>
<svg class="a" style="left:335px;top:877px;" width="9" height="7" viewBox="0 0 9 7"><path d="M4.500 6.700 L8.800 0.300 H0.200z" fill="#3a3a3a"/></svg>
<div class="a" style="left:0px;top:890px;width:1712px;height:28px;background:#e9eff7;"></div>
<div class="a" style="left:1699px;top:897px;width:2px;height:2px;background:#8d95a3;"></div>
<div class="a" style="left:1695px;top:902px;width:2px;height:2px;background:#8d95a3;"></div>
<div class="a" style="left:1699px;top:902px;width:2px;height:2px;background:#8d95a3;"></div>
<div class="a" style="left:1690px;top:906px;width:2px;height:2px;background:#8d95a3;"></div>
<div class="a" style="left:1695px;top:906px;width:2px;height:2px;background:#8d95a3;"></div>
<div class="a" style="left:1699px;top:906px;width:2px;height:2px;background:#8d95a3;"></div>
<div class="a" style="left:346px;top:167px;width:1366px;height:723px;background:#f0f0f0;"></div>
<div class="a" style="left:346px;top:167px;width:7px;height:723px;background:#fff;"></div>
<div class="a" style="left:353px;top:167px;width:1px;height:723px;background:#cfe0f8;"></div>
<div class="a" style="left:350px;top:519px;width:2px;height:2px;background:#9db7e0;"></div>
<div class="a" style="left:350px;top:523px;width:2px;height:2px;background:#9db7e0;"></div>
<div class="a" style="left:350px;top:527px;width:2px;height:2px;background:#9db7e0;"></div>
<div class="a" style="left:350px;top:531px;width:2px;height:2px;background:#9db7e0;"></div>
<div class="a" style="left:350px;top:535px;width:2px;height:2px;background:#9db7e0;"></div>
<div class="a" style="left:350px;top:539px;width:2px;height:2px;background:#9db7e0;"></div>
<div class="a" style="left:354px;top:167px;width:1358px;height:25px;background:linear-gradient(#fee294 0%,#fed283 20%,#fdc06a 42%,#fdb457 55%,#fdae50 75%,#fda63f 100%);"></div>
<svg class="a" style="left:361px;top:172px;" width="16" height="16" viewBox="0 0 16 16"><circle cx="8" cy="8" r="7.600" fill="#2549ad" stroke="#16367f" stroke-width="0.800"/><path d="M5.400 6.100 c0 -1.600 1.200 -2.600 2.700 -2.600 s2.700 1 2.700 2.400 c0 1.800 -2.400 1.900 -2.400 3.800" fill="none" stroke="#fff" stroke-width="1.900"/><circle cx="8.400" cy="12.300" r="1.150" fill="#fff"/></svg>
<span class="t" style="left:382.0px;top:170.5px;font-size:13px;line-height:17px;color:#2a3c6e;letter-spacing:0.07px;">Questionnaire Procédure de Saisie Dynamique/Principal/IKMArt (Saisie Article)</span>
<svg class="a" style="left:1690px;top:177px;" width="10" height="6" viewBox="0 0 10 6"><path d="M0.500 0.500 h9 l-4.500 5z" fill="#1c3566"/></svg>
<div class="a" style="left:354px;top:192px;width:1358px;height:24px;background:#fff;"></div>
<div class="a" style="left:354px;top:216px;width:1358px;height:2px;background:#a9c6f2;"></div>
<div class="a" style="left:842px;top:194px;width:174px;height:23px;background:linear-gradient(#f4f9ff,#dfeafa);border:1px solid #b0c4e6;border-bottom:none;border-radius:4px 4px 0 0;"></div>
<svg class="a" style="left:365px;top:196px;" width="19" height="18" viewBox="0 0 19 18"><path d="M2 4 l12 -2.500 l4 1.500 v11 l-4 3 l-12 -1z" fill="#2a3448"/><path d="M2 4 l12 -2.500 l4 1.500 l-4 1.500z" fill="#46536e"/><rect x="6" y="7" width="4" height="5" fill="#5a6b55"/><rect x="11" y="7" width="2" height="5" fill="#8a7a40"/></svg>
<span class="t" style="left:388.0px;top:196.5px;font-size:13px;line-height:17px;color:#3b66b4;letter-spacing:0.02px;">Gestion Commerciale ...</span>
<svg class="a" style="left:544px;top:197px;" width="18" height="16" viewBox="0 0 18 16"><path d="M3 15 L9 2 L15 15" fill="none" stroke="#d9482b" stroke-width="1.900"/><path d="M0.500 11.500 L17.500 8.500" stroke="#e3a648" stroke-width="1.900"/><path d="M5.800 10.600 L12.200 9.500" stroke="#d9482b" stroke-width="1.400"/></svg>
<span class="t" style="left:566.0px;top:196.5px;font-size:13px;line-height:17px;color:#3b66b4;letter-spacing:-0.32px;">Variables (VSD) : Variab...</span>
<svg class="a" style="left:723px;top:197px;" width="17" height="17" viewBox="0 0 17 17"><circle cx="8.500" cy="8.500" r="8" fill="#d8341c"/><circle cx="8.500" cy="8.500" r="8" fill="none" stroke="#a82210" stroke-width="0.800"/><path d="M5.500 12 L11.500 5" stroke="#fff" stroke-width="2.400" stroke-linecap="round"/></svg>
<span class="t" style="left:744.0px;top:196.5px;font-size:13px;line-height:17px;color:#3b66b4;letter-spacing:0.04px;">Questionnaires</span>
<svg class="a" style="left:847px;top:197px;" width="17" height="17" viewBox="0 0 16 16"><circle cx="8" cy="8" r="7.600" fill="#2549ad" stroke="#16367f" stroke-width="0.800"/><path d="M5.400 6.100 c0 -1.600 1.200 -2.600 2.700 -2.600 s2.700 1 2.700 2.400 c0 1.800 -2.400 1.900 -2.400 3.800" fill="none" stroke="#fff" stroke-width="1.900"/><circle cx="8.400" cy="12.300" r="1.150" fill="#fff"/></svg>
<span class="t" style="left:868.0px;top:196.5px;font-size:13px;line-height:17px;color:#3b66b4;letter-spacing:0.02px;">Questionnaire Procéd...</span>
<div class="a" style="left:354px;top:223px;width:683px;height:630px;background:#fff;border-style:solid;border-width:2px 2px 1px 1px;border-color:#8e8e8e #989898 #6a7a9a #7a88a6;"></div>
<div class="a" style="left:355px;top:225px;width:680px;height:20px;background:linear-gradient(#f5f8fc 0%,#e6ecf6 45%,#d6dfef 55%,#dee6f3 100%);border-bottom:1px solid #b6cdf0;"></div>
<div class="a" style="left:355px;top:225px;width:35px;height:20px;background:linear-gradient(#a2bee9,#a9c4ec 50%,#afc8ee);"></div>
<svg class="a" style="left:378px;top:233px;" width="9" height="9" viewBox="0 0 9 9"><path d="M8.500 0.500 V8.500 H0.500z" fill="#e6eefa"/></svg>
<div class="a" style="left:390px;top:225px;width:73px;height:20px;background:linear-gradient(#ffdf9f 0%,#fdcd7c 45%,#f9b95c 58%,#fac470 100%);"></div>
<div class="a" style="left:462px;top:226px;width:1px;height:18px;background:#a9bbdc;"></div>
<span class="t" style="left:398.0px;top:225.5px;font-size:13px;line-height:17px;color:#1a1a1a;letter-spacing:-0.79px;">Num. Ordre</span>
<div class="a" style="left:527px;top:226px;width:1px;height:18px;background:#a9bbdc;"></div>
<span class="t" style="left:470.0px;top:225.5px;font-size:13px;line-height:17px;color:#1a1a1a;letter-spacing:-0.60px;">Catégorie</span>
<div class="a" style="left:635px;top:226px;width:1px;height:18px;background:#a9bbdc;"></div>
<span class="t" style="left:553.0px;top:225.5px;font-size:13px;line-height:17px;color:#1a1a1a;letter-spacing:-0.64px;">Information</span>
<div class="a" style="left:787px;top:226px;width:1px;height:18px;background:#a9bbdc;"></div>
<span class="t" style="left:650.0px;top:225.5px;font-size:13px;line-height:17px;color:#1a1a1a;letter-spacing:-0.58px;">Désignation Information</span>
<div class="a" style="left:841px;top:226px;width:1px;height:18px;background:#a9bbdc;"></div>
<span class="t" style="left:797.0px;top:225.5px;font-size:13px;line-height:17px;color:#1a1a1a;letter-spacing:-0.36px;">Affiché</span>
<div class="a" style="left:879px;top:226px;width:1px;height:18px;background:#a9bbdc;"></div>
<span class="t" style="left:849.0px;top:225.5px;font-size:13px;line-height:17px;color:#1a1a1a;letter-spacing:-0.64px;">Saisi</span>
<div class="a" style="left:915px;top:226px;width:1px;height:18px;background:#a9bbdc;"></div>
<span class="t" style="left:886.0px;top:225.5px;font-size:13px;line-height:17px;color:#1a1a1a;letter-spacing:-0.75px;">Exe.</span>
<div class="a" style="left:1015px;top:226px;width:1px;height:18px;background:#a9bbdc;"></div>
<span class="t" style="left:927.0px;top:225.5px;font-size:13px;line-height:17px;color:#1a1a1a;letter-spacing:-0.52px;">Requête Règle</span>
<div class="a" style="left:355px;top:834px;width:680px;height:18px;background:#7195c7;border-top:1px solid #5a6f98;"></div>
<div class="a" style="left:355px;top:835px;width:18px;height:17px;background:linear-gradient(#c4d7f5,#aec8f0);border-right:1px solid #5a6f98;"></div>
<div class="a" style="left:1017px;top:835px;width:18px;height:17px;background:linear-gradient(#c4d7f5,#aec8f0);border-left:1px solid #5a6f98;"></div>
<div class="a" style="left:373px;top:835px;width:457px;height:17px;background:linear-gradient(#cfdff8 0%,#bdd2f3 50%,#a9c4ee 55%,#bcd1f3 100%);"></div>
<svg class="a" style="left:360px;top:838.5px;" width="6" height="10" viewBox="0 0 6 10"><path d="M5.700 0.300 V9.700 L0.300 5z" fill="#2a3f6a"/></svg>
<svg class="a" style="left:1022px;top:838.5px;" width="6" height="10" viewBox="0 0 6 10"><path d="M0.300 0.300 V9.700 L5.700 5z" fill="#2a3f6a"/></svg>
<div class="a" style="left:357px;top:861px;width:99px;height:23px;background:#cccccc;border:1px solid #bfbfbf;"></div>

<span class="t" style="left:390.0px;top:864.0px;font-size:13px;line-height:17px;color:#7d7d7d;letter-spacing:-0.41px;">Validation</span>
<svg class="a" style="left:372px;top:867px;" width="11" height="9" viewBox="0 0 11 9"><path d="M1 4.500 L4 7.500 L10 1" fill="none" stroke="#b9b9b9" stroke-width="1.800"/></svg>
<div class="a" style="left:460px;top:861px;width:98px;height:23px;background:#cccccc;border:1px solid #bfbfbf;"></div>

<span class="t" style="left:495.0px;top:864.0px;font-size:13px;line-height:17px;color:#7d7d7d;letter-spacing:-0.44px;">Abandon</span>
<svg class="a" style="left:476px;top:867px;" width="12" height="11" viewBox="0 0 12 11"><path d="M1 1 L11 10 M11 1 L1 10" fill="none" stroke="#b3b3b3" stroke-width="2.200"/></svg>
<div class="a" style="left:563px;top:861px;width:98px;height:23px;background:#cccccc;border:1px solid #bfbfbf;"></div>

<span class="t" style="left:591.0px;top:864.0px;font-size:13px;line-height:17px;color:#7d7d7d;letter-spacing:-0.59px;">Saisie Req.</span>
<svg class="a" style="left:570px;top:866.5px;" width="18" height="12" viewBox="0 0 18 12"><rect x="0.500" y="0.500" width="17" height="11" fill="#1c1c1c" stroke="#4a4a4a"/><rect x="1" y="1" width="16" height="3.500" fill="#dedede"/><rect x="7" y="6" width="8" height="3" fill="#b5b5b5"/><rect x="2.500" y="6.500" width="3" height="2" fill="#8a8a8a"/></svg>
<div class="a" style="left:665px;top:861px;width:98px;height:23px;background:#cccccc;border:1px solid #bfbfbf;"></div>

<span class="t" style="left:697.0px;top:864.0px;font-size:13px;line-height:17px;color:#7d7d7d;letter-spacing:-0.81px;">Formulaire</span>
<svg class="a" style="left:677px;top:865px;" width="16" height="15" viewBox="0 0 16 15"><circle cx="6" cy="6" r="4.500" fill="#dcdcdc" stroke="#b0b0b0" stroke-width="1.500"/><path d="M9.500 9.500 L14.500 14" stroke="#a8a090" stroke-width="2.500" stroke-linecap="round"/></svg>
<div class="a" style="left:1043px;top:248px;width:669px;height:605px;background:#f0f0f0;border-bottom:1px solid #9c9c9c;border-left:1px solid #9c9c9c;"></div>
<svg class="a" style="left:0;top:0;" width="1705" height="300" viewBox="0 0 1705 300">
<path d="M1043.500 853 V248.500 H1050" fill="none" stroke="#9c9c9c"/>
<path d="M1154 248.500 H1466" stroke="#dedede"/>
<path d="M1466 248.500 H1712" stroke="#b4b4b4"/>
<path d="M1362 248.500 L1371 232 Q1373.500 227 1379 227 H1448 Q1453 227 1455.500 231.500 L1464 246 Q1465.500 248.500 1468 248.500" fill="#f0f0f0" stroke="#a6a6a6"/>
<path d="M1247 248.500 L1256 232 Q1258.500 227 1264 227 H1356 Q1361 227 1363.500 231.500 L1373 248.500" fill="#f0f0f0" stroke="#a6a6a6"/>
<path d="M1141 248.500 L1150 232 Q1152.500 227 1158 227 H1241 Q1246 227 1248.500 231.500 L1260.500 248.500" fill="#f0f0f0" stroke="#a6a6a6"/>
<path d="M1050 248.500 L1058.500 231.500 Q1060.500 227 1066 227 H1135 Q1140 227 1142.500 231.500 L1154.500 248.500" fill="#f0f0f0" stroke="#9c9c9c"/>
</svg>
<svg class="a" style="left:1062px;top:229px;" width="15" height="17" viewBox="0 0 15 17"><path d="M5.500 0.500 h5.500 l3 3 v9.500 h-8.500z" fill="#f3eee8" stroke="#e2dbd3" stroke-width="0.600"/><path d="M10 0.800 q2.500 0.500 3.800 3.200 l-3 -0.300z" fill="#aea69f"/><path d="M1 4 h5.500 l3.500 3 v9.500 h-9z" fill="#faf4ed" stroke="#e2dbd3" stroke-width="0.600"/><path d="M5.500 4.300 q2.800 0.600 4.300 3.400 l-3.300 -0.300z" fill="#9d958e"/></svg>
<span class="t" style="left:1083.0px;top:228.2px;font-size:13px;line-height:17px;color:#111;letter-spacing:-0.09px;font-weight:bold;">Définition</span>
<svg class="a" style="left:1155px;top:232px;" width="12" height="10" viewBox="0 0 12 10"><path d="M1 5 L4.500 8.500 L11 1.500" fill="none" stroke="#38a6c2" stroke-width="2.600"/></svg>
<span class="t" style="left:1174.0px;top:228.2px;font-size:13px;line-height:17px;color:#222;letter-spacing:-0.48px;">Bouton Action</span>
<svg class="a" style="left:1258px;top:229px;" width="18" height="18" viewBox="0 0 18 18"><path d="M1.500 3 h15 v10.500 h-10.500 l-3.500 3.500 v-3.500 h-1z" fill="#fbfbfb" stroke="#c2c2c2" stroke-width="0.900"/><path d="M9.500 7 L2.500 15.500" stroke="#9a9a9a" stroke-width="0.900"/><path d="M10 6.800 L16 2.300" stroke="#ea3f28" stroke-width="4" stroke-linecap="round"/></svg>
<span class="t" style="left:1279.0px;top:228.2px;font-size:13px;line-height:17px;color:#222;letter-spacing:-0.68px;">Caractéristiques</span>
<svg class="a" style="left:1373.5px;top:229px;" width="18" height="18" viewBox="0 0 18 18"><path d="M1 3 V17.500 H17.500" fill="none" stroke="#4a4a4a" stroke-width="1.200"/><g fill="#1c2cf0"><rect x="2" y="9.500" width="2.600" height="7.500"/><rect x="5.300" y="11.500" width="2.600" height="5.500"/><rect x="8.600" y="12.500" width="2.600" height="4.500"/><rect x="11.900" y="10" width="2.600" height="7"/></g><path d="M2 9 L8.500 3 L12 6 L8.500 9 L5.500 7z" fill="#6a6a6a"/><path d="M8.500 3 L12 6 L14.500 3.800 L12 1.800z" fill="#e9e9e9" stroke="#777" stroke-width="0.500"/><path d="M11.500 0.800 h5.500 v5.500 l-2 -2 l-2.500 2.200 l-1.500 -1.500 l2.500 -2.200z" fill="#1a2ad8"/></svg>
<span class="t" style="left:1395.0px;top:228.2px;font-size:13px;line-height:17px;color:#222;letter-spacing:-0.64px;">Initialisation</span>
<span class="t" style="left:1130.0px;top:255.3px;font-size:13px;line-height:17px;color:#111;letter-spacing:-0.69px;">Num. Ordre</span>
<span class="t" style="left:1140.0px;top:278.3px;font-size:13px;line-height:17px;color:#111;letter-spacing:-0.60px;">Catégorie</span>
<span class="t" style="left:1121.0px;top:302.3px;font-size:13px;line-height:17px;color:#111;letter-spacing:-0.55px;">Que.Pré-Déf.</span>
<span class="t" style="left:1136.0px;top:323.3px;font-size:13px;line-height:17px;color:#111;letter-spacing:-0.21px;">Que./Info.</span>
<span class="t" style="left:1154.0px;top:346.3px;font-size:13px;line-height:17px;color:#111;letter-spacing:-0.70px;">Format</span>
<span class="t" style="left:1157.0px;top:370.3px;font-size:13px;line-height:17px;color:#111;letter-spacing:-0.51px;">Libellé</span>
<span class="t" style="left:1132.0px;top:393.3px;font-size:13px;line-height:17px;color:#111;letter-spacing:-0.36px;">Var. Libellé</span>
<span class="t" style="left:1167.0px;top:417.3px;font-size:13px;line-height:17px;color:#111;letter-spacing:-0.30px;">Titre</span>
<span class="t" style="left:1142.0px;top:440.3px;font-size:13px;line-height:17px;color:#111;letter-spacing:-0.21px;">Var. Titre</span>
<span class="t" style="left:1146.0px;top:485.3px;font-size:13px;line-height:17px;color:#111;letter-spacing:-0.22px;">Affichée</span>
<span class="t" style="left:1159.0px;top:506.3px;font-size:13px;line-height:17px;color:#111;letter-spacing:-0.57px;">Saisie</span>
<span class="t" style="left:1099.0px;top:529.3px;font-size:13px;line-height:17px;color:#111;letter-spacing:-0.48px;">Exe. avant Ques.</span>
<span class="t" style="left:1095.0px;top:553.3px;font-size:13px;line-height:17px;color:#111;letter-spacing:-0.47px;">Exe. avant Retour</span>
<span class="t" style="left:1100.0px;top:574.3px;font-size:13px;line-height:17px;color:#111;letter-spacing:-0.64px;">Exe. après Erreur</span>
<span class="t" style="left:1109.0px;top:595.3px;font-size:13px;line-height:17px;color:#111;letter-spacing:-0.42px;">Exe. si Non Aff.</span>
<span class="t" style="left:1091.0px;top:616.3px;font-size:13px;line-height:17px;color:#111;letter-spacing:-0.47px;">Saisie avec Entrée</span>
<span class="t" style="left:1108.0px;top:661.3px;font-size:13px;line-height:17px;color:#111;letter-spacing:-0.49px;">Aide Disponible</span>
<span class="t" style="left:1108.0px;top:463.3px;font-size:13px;line-height:17px;color:#111;letter-spacing:-0.64px;">Règle DIALOG</span>
<div class="a" style="left:1205px;top:254px;width:50px;height:19px;background:#a9d6f8;border:1px solid #3a86d9;box-shadow:0 0 0 1px rgba(170,225,255,0.55);"></div>
<div class="a" style="left:1207px;top:256px;width:34px;height:15px;background:#0a74da;"></div>
<div class="a" style="left:1241px;top:256px;width:12px;height:15px;background:#0c98b2;"></div>
<div class="a" style="left:1240px;top:256px;width:1px;height:15px;background:#7d8a5e;"></div>
<span class="t" style="left:1233.0px;top:258.0px;font-size:10px;line-height:14px;color:#e6f2ff;letter-spacing:0.44px;">0</span>
<div class="a" style="left:1205px;top:275px;width:310px;height:23px;background:#e1e1e1;border:1px solid #adadad;"></div>
<svg class="a" style="left:1500px;top:283.5px;" width="10" height="6" viewBox="0 0 10 6"><path d="M0.800 0.800 L5 5 L9.200 0.800" fill="none" stroke="#3a3a3a" stroke-width="1.200"/></svg>
<div class="a" style="left:1205px;top:300px;width:184px;height:19px;background:#fff;border:1px solid #7a7a7a;"></div>
<div class="a" style="left:1205px;top:322px;width:227px;height:18px;background:#fff;border:1px solid #7a7a7a;"></div>
<div class="a" style="left:1392px;top:302px;width:16px;height:15px;background:#f4f4f4;border:1px solid #adadad;"></div>
<span class="t" style="left:1396.5px;top:301.5px;font-size:12px;line-height:16px;color:#111;letter-spacing:-0.33px;font-weight:bold;">?</span>
<div class="a" style="left:1435px;top:323px;width:16px;height:15px;background:#f4f4f4;border:1px solid #adadad;"></div>
<span class="t" style="left:1439.5px;top:322.5px;font-size:12px;line-height:16px;color:#111;letter-spacing:-0.33px;font-weight:bold;">?</span>
<div class="a" style="left:1205px;top:343px;width:352px;height:23px;background:#cccccc;border:1px solid #c4c4c4;"></div>
<svg class="a" style="left:1542px;top:351.5px;" width="10" height="6" viewBox="0 0 10 6"><path d="M0.800 0.800 L5 5 L9.200 0.800" fill="none" stroke="#b0b0b0" stroke-width="1.200"/></svg>
<div class="a" style="left:1205px;top:390px;width:310px;height:23px;background:#cccccc;border:1px solid #c4c4c4;"></div>
<svg class="a" style="left:1500px;top:398.5px;" width="10" height="6" viewBox="0 0 10 6"><path d="M0.800 0.800 L5 5 L9.200 0.800" fill="none" stroke="#b0b0b0" stroke-width="1.200"/></svg>
<div class="a" style="left:1205px;top:437px;width:310px;height:23px;background:#cccccc;border:1px solid #c4c4c4;"></div>
<svg class="a" style="left:1500px;top:445.5px;" width="10" height="6" viewBox="0 0 10 6"><path d="M0.800 0.800 L5 5 L9.200 0.800" fill="none" stroke="#b0b0b0" stroke-width="1.200"/></svg>
<div class="a" style="left:1308px;top:463px;width:17px;height:16px;background:#cccccc;border:1px solid #bfbfbf;"></div>
<span class="t" style="left:1313.0px;top:463.5px;font-size:11px;line-height:15px;color:#e6e6e6;letter-spacing:0.28px;font-weight:bold;">?</span>
<div class="a" style="left:1205px;top:487px;width:11px;height:11px;background:#fff;border:1px solid #d6d6d6;"></div>
<div class="a" style="left:1205px;top:508px;width:11px;height:11px;background:#fff;border:1px solid #d6d6d6;"></div>
<div class="a" style="left:1205px;top:526px;width:310px;height:23px;background:#e1e1e1;border:1px solid #adadad;"></div>
<svg class="a" style="left:1500px;top:534.5px;" width="10" height="6" viewBox="0 0 10 6"><path d="M0.800 0.800 L5 5 L9.200 0.800" fill="none" stroke="#3a3a3a" stroke-width="1.200"/></svg>
<div class="a" style="left:1205px;top:555px;width:11px;height:11px;background:#fff;border:1px solid #333;"></div>
<div class="a" style="left:1205px;top:576px;width:11px;height:11px;background:#fff;border:1px solid #333;"></div>
<div class="a" style="left:1205px;top:597px;width:11px;height:11px;background:#fff;border:1px solid #333;"></div>
<svg class="a" style="left:1206.5px;top:598.5px;" width="8" height="8" viewBox="0 0 8 8"><path d="M0.800 4 L3 6.500 L7.200 1.200" fill="none" stroke="#333" stroke-width="1.100"/></svg>
<div class="a" style="left:1205px;top:618px;width:11px;height:11px;background:#fff;border:1px solid #333;"></div>
<div class="a" style="left:1056px;top:640px;width:623px;height:17px;background:#e1e1e1;border:1px solid #adadad;"></div>
<span class="t" style="left:1355.0px;top:640.3px;font-size:13px;line-height:17px;color:#111;letter-spacing:-0.50px;">Aide</span>
<div class="a" style="left:1205px;top:663px;width:11px;height:11px;background:#fff;border:1px solid #d6d6d6;"></div>
<div class="a" style="left:1046.5px;top:861px;width:89.5px;height:23px;background:#e3e3e3;border:1px solid #b4b4b4;"></div>
<span class="t" style="left:1075.0px;top:864.0px;font-size:13px;line-height:17px;color:#111;letter-spacing:-0.31px;">Validation</span>
<svg class="a" style="left:1057px;top:867px;" width="12" height="10" viewBox="0 0 12 10"><path d="M1 5 L4.500 8.500 L11 1.500" fill="none" stroke="#36a6c0" stroke-width="2.800"/></svg>
<div class="a" style="left:1140px;top:861px;width:90px;height:23px;background:#e3e3e3;border:1px solid #b4b4b4;"></div>
<span class="t" style="left:1171.0px;top:864.0px;font-size:13px;line-height:17px;color:#111;letter-spacing:-0.44px;">Abandon</span>
<svg class="a" style="left:1152px;top:866px;" width="13" height="12" viewBox="0 0 13 12"><path d="M1.500 1.500 L11.500 10.500 M11.500 1.500 L1.500 10.500" fill="none" stroke="#f0641e" stroke-width="3.200"/></svg>
<svg class="a" style="left:1288px;top:257px;" width="11" height="18" viewBox="0 0 11 18"><path d="M1 1 V14 L4 11 L6.500 16.500 L8.500 15.500 L6 10.500 H10z" fill="#fff" stroke="#111" stroke-width="1.400" stroke-linejoin="round"/></svg>
</div></div>
</body></html>
